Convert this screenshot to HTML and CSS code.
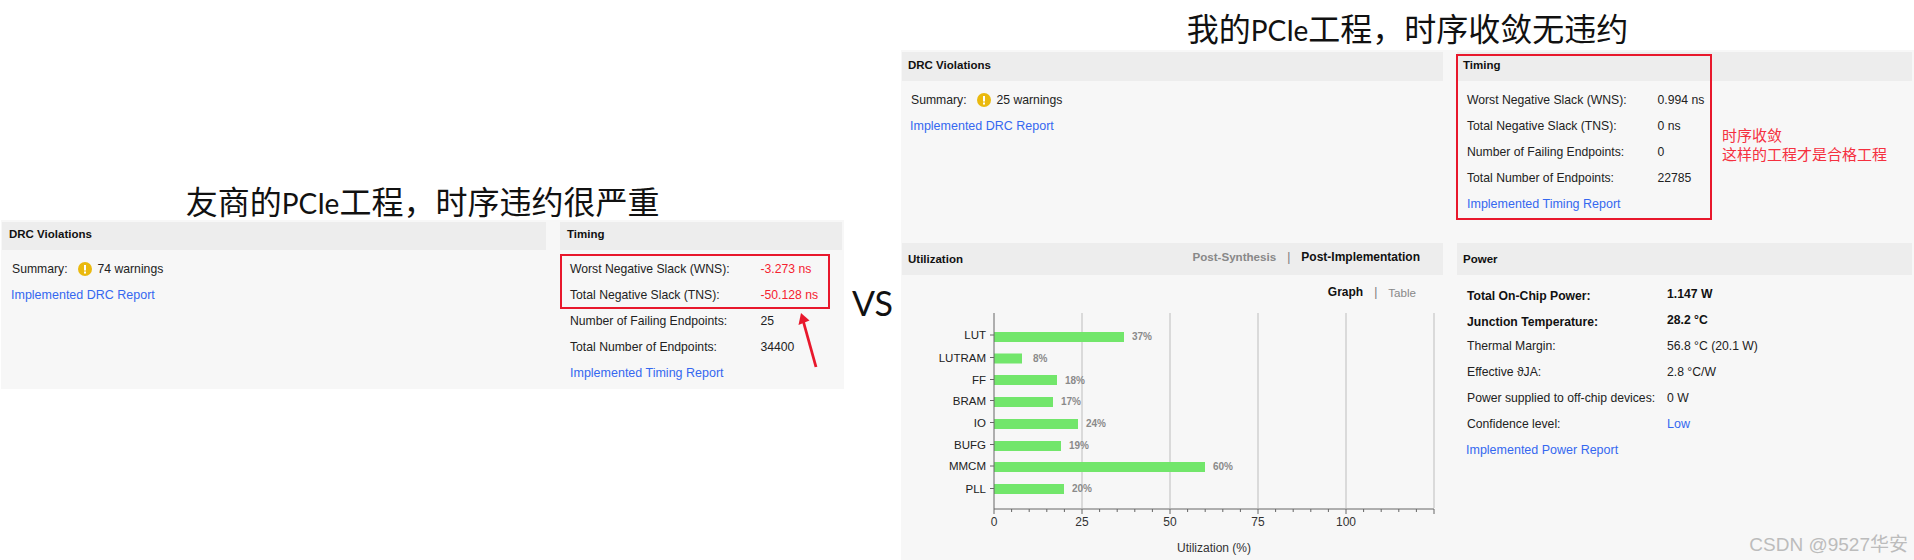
FILE: index.html
```html
<!DOCTYPE html>
<html lang="zh-CN">
<head>
    <meta charset="UTF-8">
    <meta name="viewport" content="width=device-width, initial-scale=1.0">
    <title>PCIe timing compare</title>
    <link rel="stylesheet" href="styles.css">
</head>
<body>
    <div class="page">
        <section class="vendor">
            <h1 class="title">友商的<span class="latin">PCIe</span>工程，时序违约很严重</h1>
            <div class="panel">
                <div class="card">
                    <h2 class="head">DRC Violations</h2>
                    <div class="drc-body">
                        <div class="summary">
                            <span>Summary:</span>
                            <svg class="warn" width="14" height="14" viewBox="0 0 14 14"><circle cx="7" cy="7" r="7" fill="#eab90e"/><rect x="6" y="3" width="2" height="5.5" fill="#fff"/><rect x="6" y="9.5" width="2" height="2" fill="#fff"/></svg>
                            <span>74 warnings</span>
                        </div>
                        <a class="link">Implemented DRC Report</a>
                    </div>
                </div>
                <div class="card">
                    <h2 class="head">Timing</h2>
                    <div class="rows">
                        <span>Worst Negative Slack (WNS):</span><span class="bad">-3.273 ns</span>
                        <span>Total Negative Slack (TNS):</span><span class="bad">-50.128 ns</span>
                        <span>Number of Failing Endpoints:</span><span>25</span>
                        <span>Total Number of Endpoints:</span><span>34400</span>
                        <a class="link wide">Implemented Timing Report</a>
                    </div>
                    <div class="mark mark-vendor"></div>
                    <svg class="arrow" width="30" height="60" viewBox="0 0 30 60"><path d="M20 55L7.5 10" stroke="#e8182c" stroke-width="2.8" fill="none"/><path d="M5 1L13.5 8.5L2.5 13Z" fill="#e8182c"/></svg>
                </div>
            </div>
        </section>

        <div class="versus">VS</div>

        <section class="mine">
            <h1 class="title">我的<span class="latin">PCIe</span>工程，时序收敛无违约</h1>
            <div class="dash">
                <div class="card">
                    <h2 class="head">DRC Violations</h2>
                    <div class="drc-body">
                        <div class="summary">
                            <span>Summary:</span>
                            <svg class="warn" width="14" height="14" viewBox="0 0 14 14"><circle cx="7" cy="7" r="7" fill="#eab90e"/><rect x="6" y="3" width="2" height="5.5" fill="#fff"/><rect x="6" y="9.5" width="2" height="2" fill="#fff"/></svg>
                            <span>25 warnings</span>
                        </div>
                        <a class="link">Implemented DRC Report</a>
                    </div>
                </div>
                <div class="card">
                    <h2 class="head">Timing</h2>
                    <div class="rows">
                        <span>Worst Negative Slack (WNS):</span><span>0.994 ns</span>
                        <span>Total Negative Slack (TNS):</span><span>0 ns</span>
                        <span>Number of Failing Endpoints:</span><span>0</span>
                        <span>Total Number of Endpoints:</span><span>22785</span>
                        <a class="link wide">Implemented Timing Report</a>
                    </div>
                    <div class="mark mark-mine"></div>
                    <p class="note">时序收敛<br>这样的工程才是合格工程</p>
                </div>
                <div class="card">
                    <div class="head head-tall">
                        <h2 class="head-title">Utilization</h2>
                        <div class="tabs">
                            <span class="off">Post-Synthesis</span>
                            <span class="sep">|</span>
                            <span class="on">Post-Implementation</span>
                        </div>
                    </div>
                    <div class="tabs tabs-view">
                        <span class="on">Graph</span>
                        <span class="sep">|</span>
                        <span class="off">Table</span>
                    </div>
                    <svg class="chart" width="541" height="250" viewBox="0 0 541 250">
                        <g class="grid">
                            <path d="M180 4V199M268 4V199M356 4V199M444 4V199M532 4V199"/>
                        </g>
                        <g class="bars">
                            <rect x="92" y="23" width="130" height="10"/>
                            <rect x="92" y="44.5" width="28" height="10"/>
                            <rect x="92" y="66" width="63" height="10"/>
                            <rect x="92" y="88" width="59" height="10"/>
                            <rect x="92" y="110" width="84" height="10"/>
                            <rect x="92" y="132" width="67" height="10"/>
                            <rect x="92" y="153" width="211" height="10"/>
                            <rect x="92" y="175" width="70" height="10"/>
                        </g>
                        <g class="axis">
                            <path d="M92 4V200H532"/>
                            <path d="M88 26H92M88 48.5H92M88 70.5H92M88 91.5H92M88 113.5H92M88 135.5H92M88 157H92M88 179.5H92"/>
                            <path d="M92 200V205M180 200V205M268 200V205M356 200V205M444 200V205M532 200V205"/>
                            <path d="M109.6 200V203M127.2 200V203M144.8 200V203M162.4 200V203M197.6 200V203M215.2 200V203M232.8 200V203M250.4 200V203M285.6 200V203M303.2 200V203M320.8 200V203M338.4 200V203M373.6 200V203M391.2 200V203M408.8 200V203M426.4 200V203M461.6 200V203M479.2 200V203M496.8 200V203M514.4 200V203"/>
                        </g>
                        <g class="cat">
                            <text x="84" y="30">LUT</text>
                            <text x="84" y="52.5">LUTRAM</text>
                            <text x="84" y="74.5">FF</text>
                            <text x="84" y="95.5">BRAM</text>
                            <text x="84" y="117.5">IO</text>
                            <text x="84" y="139.5">BUFG</text>
                            <text x="84" y="161">MMCM</text>
                            <text x="84" y="183.5">PLL</text>
                        </g>
                        <g class="pct">
                            <text x="230" y="31">37%</text>
                            <text x="131" y="53">8%</text>
                            <text x="163" y="74.5">18%</text>
                            <text x="159" y="96">17%</text>
                            <text x="184" y="118">24%</text>
                            <text x="167" y="140">19%</text>
                            <text x="311" y="161">60%</text>
                            <text x="170" y="183">20%</text>
                        </g>
                        <g class="tick">
                            <text x="92" y="217">0</text>
                            <text x="180" y="217">25</text>
                            <text x="268" y="217">50</text>
                            <text x="356" y="217">75</text>
                            <text x="444" y="217">100</text>
                            <text x="312" y="243">Utilization (%)</text>
                        </g>
                    </svg>
                </div>
                <div class="card">
                    <h2 class="head head-tall">Power</h2>
                    <div class="rows rows-power">
                        <span class="strong drop">Total On-Chip Power:</span><span class="strong">1.147 W</span>
                        <span class="strong drop">Junction Temperature:</span><span class="strong">28.2 °C</span>
                        <span>Thermal Margin:</span><span>56.8 °C (20.1 W)</span>
                        <span>Effective ϑJA:</span><span>2.8 °C/W</span>
                        <span>Power supplied to off-chip devices:</span><span>0 W</span>
                        <span>Confidence level:</span><a class="link">Low</a>
                        <a class="link wide">Implemented Power Report</a>
                    </div>
                    <div class="watermark">CSDN @9527华安</div>
                </div>
            </div>
        </section>
    </div>
</body>
</html>
```

FILE: styles.css
```css
body{
    margin: 0;
    background: #fff;
    font-family: "Liberation Sans", Arial, sans-serif;
    font-size: 12.2px;
    color: #222;
}
.page{
    display: flex;
    width: 1914px;
    height: 560px;
    overflow: hidden;
}
.title{
    margin: 0;
    height: 40px;
    font-family: "Noto Sans CJK SC", sans-serif;
    font-size: 32px;
    font-weight: 400;
    line-height: 40px;
    text-align: center;
    color: #111;
    white-space: nowrap;
}
.latin{
    font-family: Lato, sans-serif;
    font-size: 28px;
}

/* left half */
.vendor{
    width: 844px;
    margin-left: 1px;
    padding-top: 180px;
}
.panel{
    display: grid;
    grid-template-columns: 544px 282px;
    column-gap: 14px;
    height: 165px;
    padding: 2px 1px;
    background: #f7f7f7;
}
.panel .head{
    padding: 0 0 4px 7px;
    height: 24px;
}
.versus{
    width: 57px;
    padding-top: 283px;
    font-family: Lato, sans-serif;
    font-size: 34px;
    line-height: 40px;
    text-align: center;
    color: #111;
    box-sizing: border-box;
}

/* right half */
.mine{
    flex: 1;
    padding-top: 7px;
}
.mine .title{
    margin-bottom: 3px;
}
.dash{
    display: grid;
    grid-template-columns: 541px 455px;
    grid-template-rows: 191px 317px;
    column-gap: 14px;
    height: 510px;
    padding: 2px 2px 0 1px;
    background: #f7f7f7;
    box-sizing: border-box;
}

.card{
    position: relative;
    min-width: 0;
}
.head{
    display: flex;
    align-items: center;
    height: 28px;
    margin: 0;
    padding-left: 6px;
    background: #ededed;
    font-size: 11.5px;
    font-weight: 700;
    color: #111;
}
.dash .head{
    height: 26px;
    padding-bottom: 3px;
}
.dash .head-tall{
    height: 32px;
    padding-bottom: 0;
    justify-content: space-between;
}
.head-title{
    margin: 0;
    font-size: 11.5px;
}
.drc-body{
    padding: 6px 0 0 10px;
}
.dash .drc-body{
    padding-left: 9px;
}
.summary{
    display: flex;
    align-items: center;
    height: 26px;
}
.warn{
    margin: 0 6px 0 10px;
}
.link{
    display: block;
    color: #3568f0;
    font-size: 12.5px;
    line-height: 26px;
}
.drc-body .link{
    margin-left: -1px;
}
.rows{
    display: grid;
    grid-template-columns: 190.5px 1fr;
    grid-auto-rows: 26px;
    align-items: center;
    padding: 6px 0 0 10px;
}
.wide{
    grid-column: 1 / 3;
}
.rows-power{
    grid-template-columns: 200px 1fr;
}
.rows-power .wide{
    margin-left: -1px;
}
.bad{
    color: #f5222f;
}
.strong{
    font-weight: 700;
    color: #111;
}
.drop{
    margin-top: 4px;
}
.tabs{
    display: flex;
    gap: 11px;
    padding-right: 23px;
    margin-top: -4px;
    font-size: 12px;
}
.tabs .off{
    font-size: 11.6px;
}
.tabs-view{
    justify-content: flex-end;
    margin: 0;
    height: 34px;
    align-items: center;
    padding-right: 27px;
}
.off{
    color: #888;
}
.sep{
    color: #777;
    font-weight: 400;
}
.on{
    font-weight: 700;
    color: #111;
}

/* chart */
.chart{
    display: block;
}
.grid path{
    stroke: #bdbdbd;
    stroke-width: 1;
    fill: none;
}
.axis path{
    stroke: #666;
    stroke-width: 1;
    fill: none;
}
.bars rect{
    fill: #72e66b;
}
.chart text{
    font-family: "Liberation Sans", Arial, sans-serif;
}
.cat text{
    font-size: 11.5px;
    text-anchor: end;
    fill: #222;
}
.pct text{
    font-size: 10px;
    font-weight: 700;
    fill: #8a8a8a;
}
.tick text{
    font-size: 12px;
    text-anchor: middle;
    fill: #333;
}

/* red annotations on top of the screenshots */
.mark{
    position: absolute;
    border: 2px solid #e8182c;
    box-sizing: border-box;
}
.mark-vendor{
    left: 0;
    top: 32px;
    width: 270px;
    height: 55px;
}
.mark-mine{
    left: -1px;
    top: 2px;
    width: 256px;
    height: 166px;
}
.arrow{
    position: absolute;
    left: 236px;
    top: 90px;
}
.note{
    position: absolute;
    left: 265px;
    top: 73px;
    margin: 0;
    font-family: "Noto Sans CJK SC", sans-serif;
    font-size: 15px;
    line-height: 19px;
    color: #f5303f;
    white-space: nowrap;
}
.watermark{
    position: absolute;
    right: 4px;
    bottom: 4px;
    font-family: "Liberation Sans", "Noto Sans CJK SC", sans-serif;
    font-size: 19px;
    color: #bcbcbc;
    white-space: nowrap;
}
```
